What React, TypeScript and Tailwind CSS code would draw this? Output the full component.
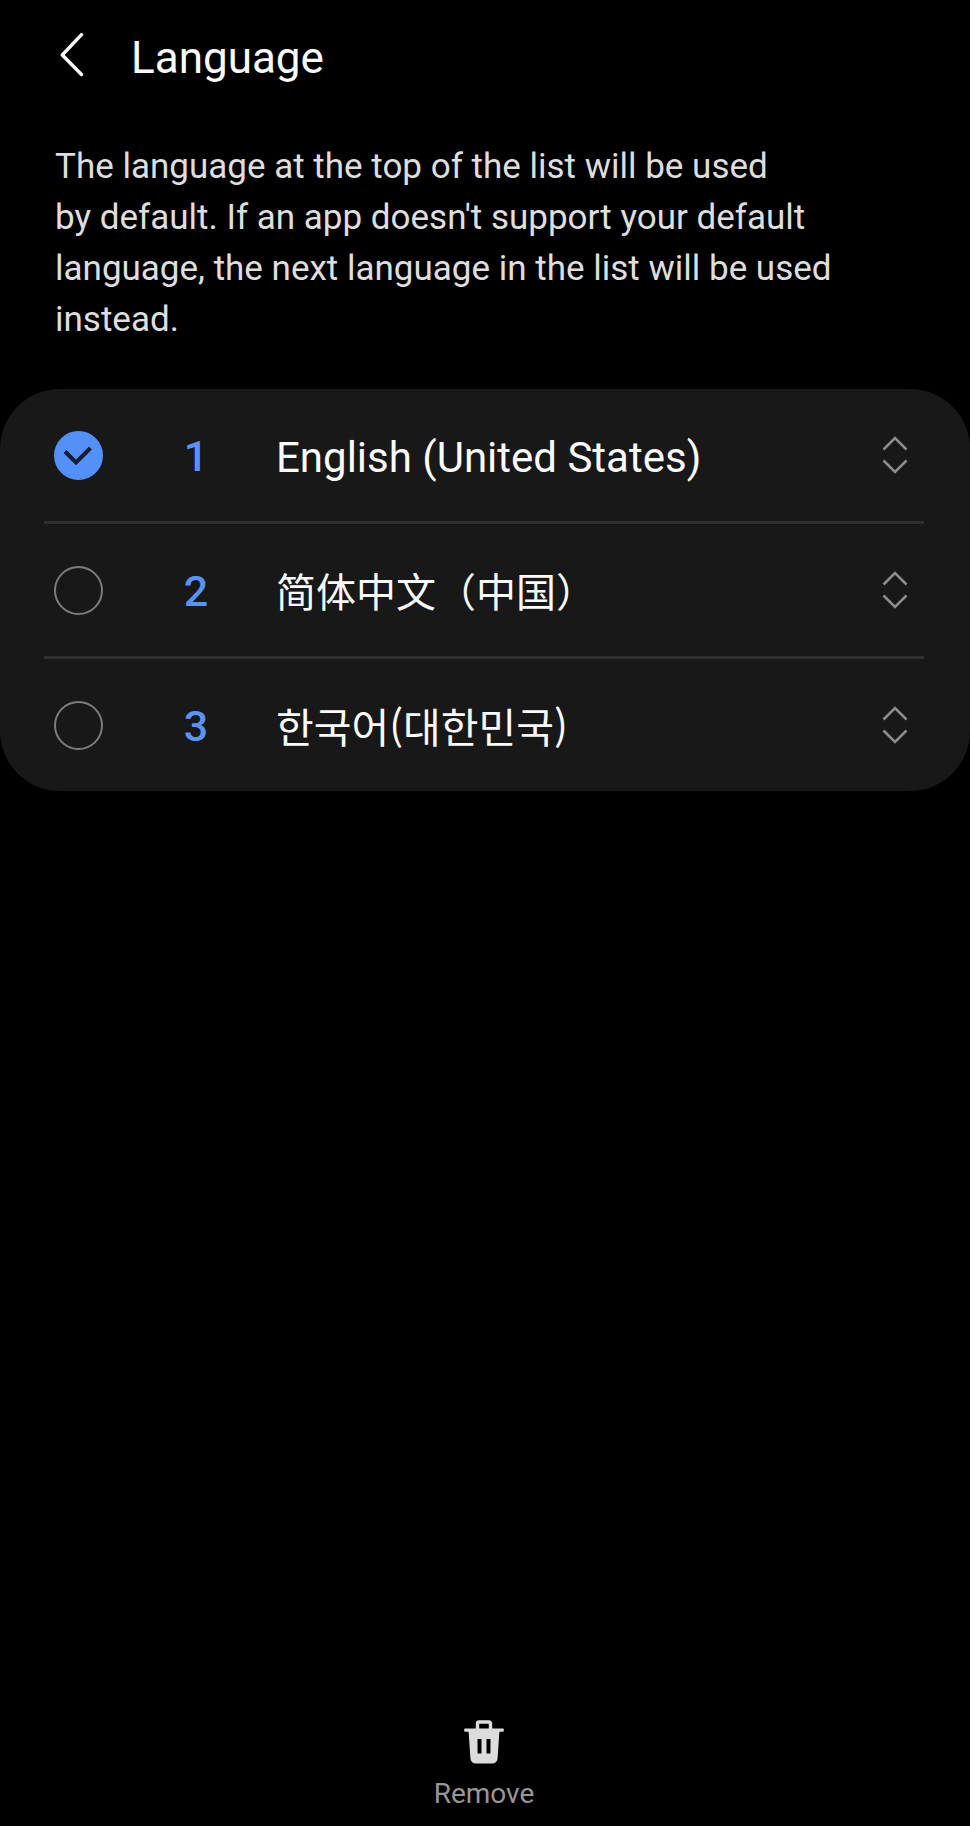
import { useState } from 'react';

const initialLanguages = [
  { id: 'en-us', name: 'English (United States)', lang: 'en', nameClass: 'pt-1 text-[42px]', selected: true },
  { id: 'zh-cn', name: '简体中文（中国）', lang: 'zh-CN', nameClass: "text-[40px] font-['Noto_Sans_CJK_SC',sans-serif]", selected: false },
  { id: 'ko-kr', name: '한국어(대한민국)', lang: 'ko', nameClass: "pt-0.5 text-[41px] font-['Noto_Sans_CJK_KR',sans-serif]", selected: false }
];

const BackIcon = () => (
  <svg className="w-6 h-11" viewBox="0 0 24 44" fill="none" stroke="currentColor" strokeWidth="3.4" strokeLinecap="round" strokeLinejoin="round">
    <path d="M21.5 1.7 2.3 22 21.5 41.5" />
  </svg>
);

const CheckIcon = () => (
  <svg className="col-start-1 row-start-1 w-[49px] h-[49px] pointer-events-none text-[#141d33] opacity-0 peer-checked:opacity-100" viewBox="0 0 49 49" fill="none" stroke="currentColor" strokeWidth="4">
    <path d="M11 20.5 22 31.5 36.5 17" />
  </svg>
);

const ReorderIcon = () => (
  <svg className="w-7 h-10" viewBox="0 0 28 40" fill="none" stroke="currentColor" strokeWidth="2.6">
    <path d="M2.5 14.5 14 3 25.5 14.5" />
    <path d="M2.5 25.5 14 37 25.5 25.5" />
  </svg>
);

const TrashIcon = () => (
  <svg className="w-10 h-11 text-[#dcdcdc]" viewBox="0 0 40 44" fill="none">
    <path d="M13.5 9V3.5a1.5 1.5 0 0 1 1.5-1.5h10a1.5 1.5 0 0 1 1.5 1.5V9" stroke="currentColor" strokeWidth="3.4" />
    <path
      fill="currentColor"
      fillRule="evenodd"
      d="M1 8.5h38a.8.8 0 0 1 .8.8V11a.8.8 0 0 1-.8.8h-3.6L33.6 38c-.3 3.6-2.2 5.5-5.6 5.5H12c-3.4 0-5.3-1.9-5.6-5.5L4.6 11.8H1a.8.8 0 0 1-.8-.8V9.3a.8.8 0 0 1 .8-.8ZM13.5 19V33.5h4V19ZM22.5 19V33.5h4V19Z"
    />
  </svg>
);

const App = () => {
  const [languages, setLanguages] = useState(initialLanguages);

  const toggle = (id: string) => {
    setLanguages(languages.map((l) => (l.id === id ? { ...l, selected: !l.selected } : l)));
  };

  const moveUp = (index: number) => {
    if (index === 0) return;
    const next = [...languages];
    [next[index - 1], next[index]] = [next[index], next[index - 1]];
    setLanguages(next);
  };

  const removeSelected = () => {
    setLanguages(languages.filter((l) => !l.selected));
  };

  return (
    <div className="min-h-screen flex flex-col bg-black font-[Roboto,sans-serif]">
      <header className="flex items-center pt-7 px-[60px] text-[#fafafa]">
        <button type="button" aria-label="Back" className="pb-1.5">
          <BackIcon />
        </button>
        <h1 className="ml-[47px] text-[44px] leading-[60px]">Language</h1>
      </header>

      <p className="mt-[53px] mx-[55px] max-w-[800px] text-[35px] leading-[51px] text-[#dedede]">
        The language at the top of the list will be used
        <br />
        by default. If an app doesn't support your default language, the next language in the list will be used
        instead.
      </p>

      <ul className="mt-11 rounded-[60px] bg-[#181818] pl-11 pr-[46px] divide-y-3 divide-[#303030]">
        {languages.map((language, index) => (
          <li key={language.id} className="flex items-center pl-2.5 pr-[15px]">
            <label className="flex flex-1 items-center h-[132px]">
              <span className="grid shrink-0">
                <input
                  type="checkbox"
                  checked={language.selected}
                  onChange={() => toggle(language.id)}
                  className="peer col-start-1 row-start-1 appearance-none w-[49px] h-[49px] rounded-full border-2 border-[#7c7c7c] checked:border-[#5390f8] checked:bg-[#5390f8]"
                />
                <CheckIcon />
              </span>
              <span className="ml-[45px] w-24 pt-0.5 text-center text-[43px] font-medium text-[#5b92f5]">{index + 1}</span>
              <span lang={language.lang} className={`ml-8 text-[#fafafa] ${language.nameClass}`}>
                {language.name}
              </span>
            </label>
            <button type="button" aria-label="Reorder" onClick={() => moveUp(index)} className="text-[#8c8c8c]">
              <ReorderIcon />
            </button>
          </li>
        ))}
      </ul>

      <footer className="mt-auto pb-3 pr-0.5 flex justify-center">
        <button type="button" onClick={removeSelected} className="flex flex-col items-center gap-2.5">
          <TrashIcon />
          <span className="text-[28px] leading-10 text-[#969696]">Remove</span>
        </button>
      </footer>
    </div>
  );
};

export default App;
